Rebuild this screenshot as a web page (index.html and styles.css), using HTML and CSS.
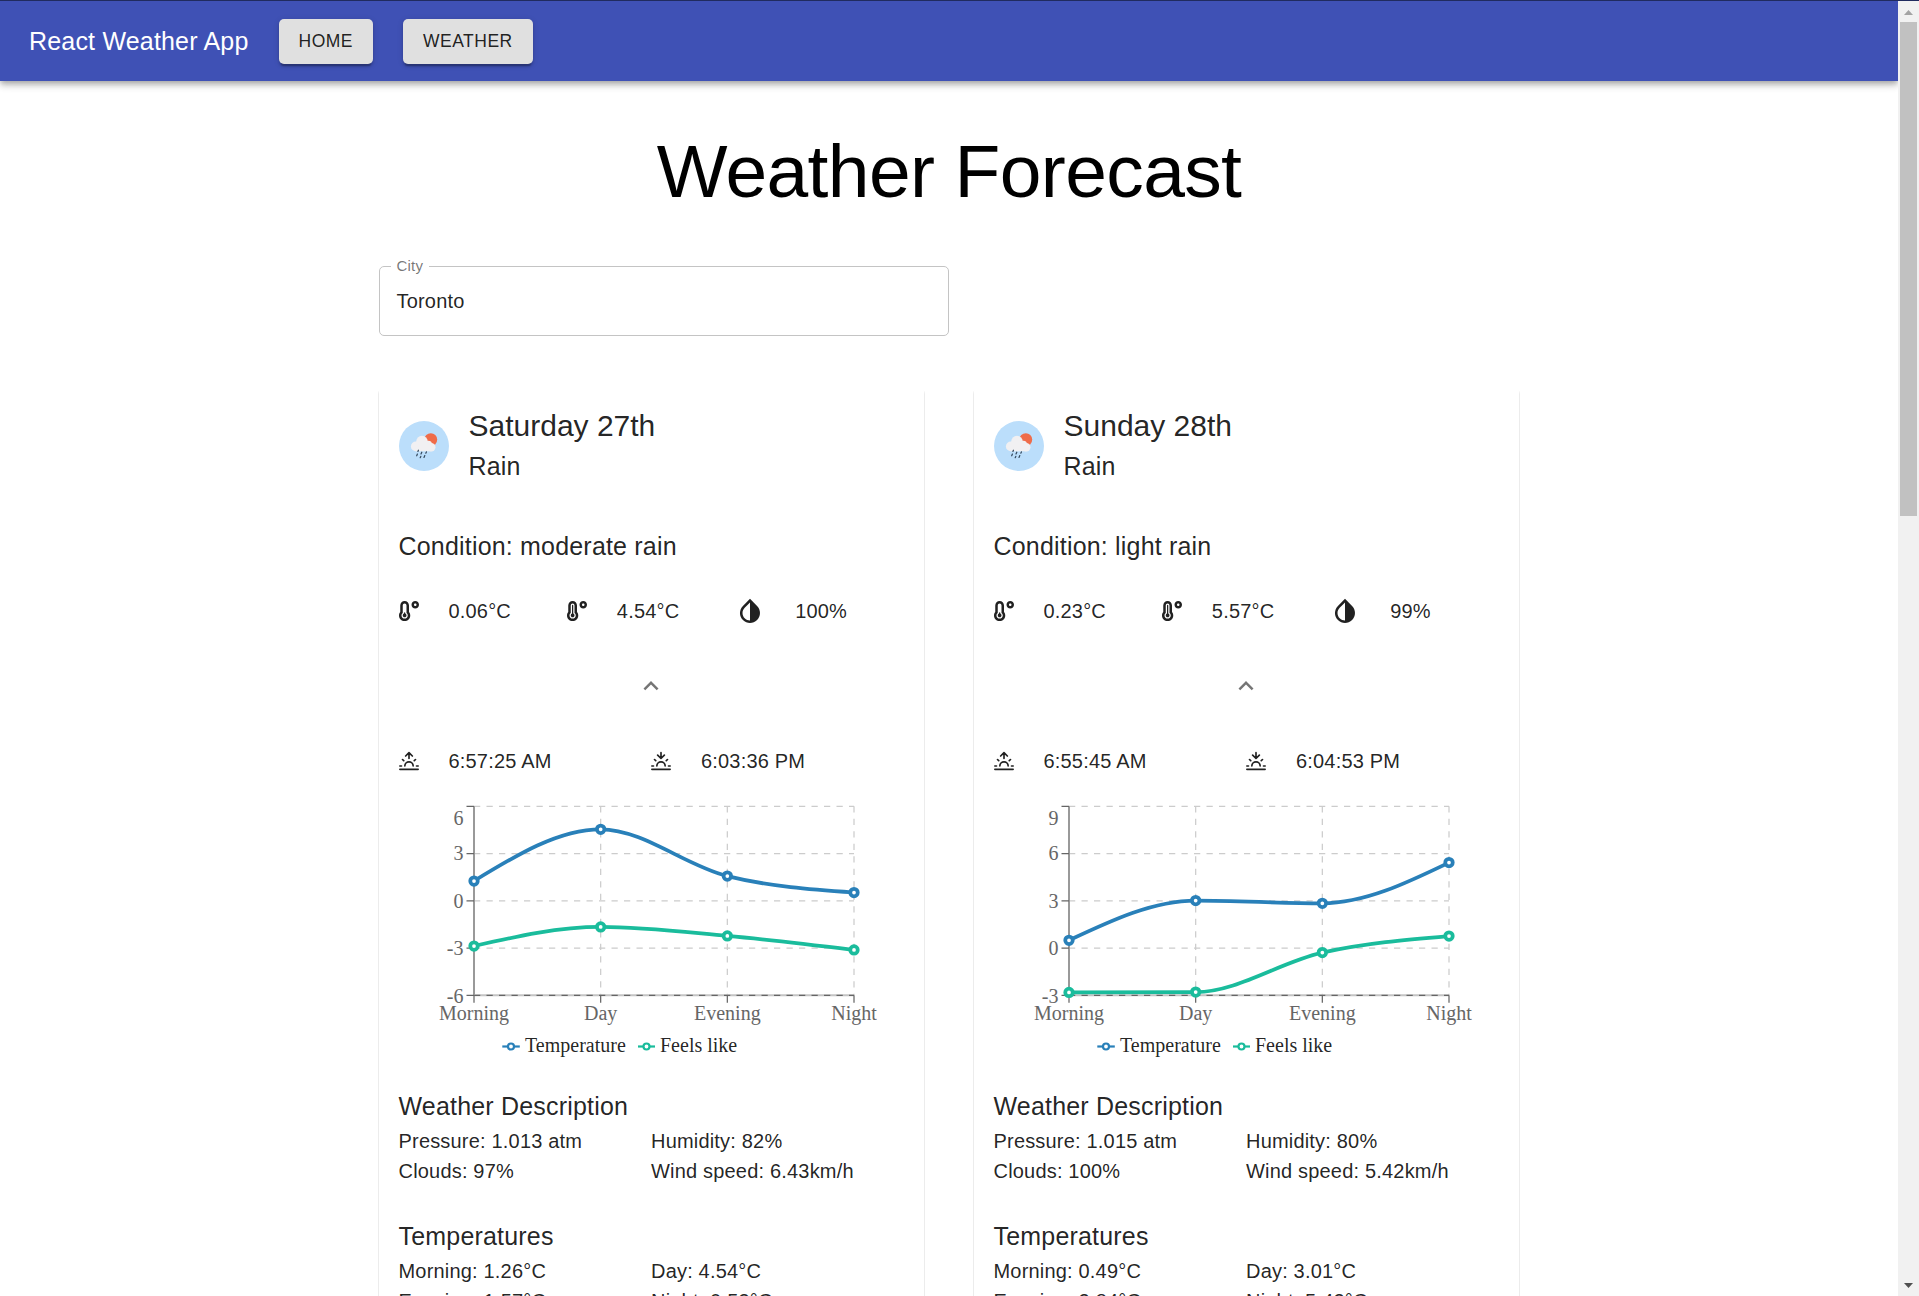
FILE: index.html
```html
<!DOCTYPE html>
<html lang="en">
<head>
<meta charset="utf-8">
<title>React Weather App</title>
<link rel="stylesheet" href="styles.css">
</head>
<body>
<svg class="sprite" aria-hidden="true">
  <symbol id="temp-low" viewBox="0 0 512 512"><path d="M416 0c-52.9 0-96 43.1-96 96s43.1 96 96 96 96-43.1 96-96-43.1-96-96-96zm0 128c-17.7 0-32-14.3-32-32s14.3-32 32-32 32 14.3 32 32-14.3 32-32 32zm-160-16C256 50.1 205.9 0 144 0S32 50.1 32 112v166.5C12.3 303.2 0 334 0 368c0 79.5 64.5 144 144 144s144-64.5 144-144c0-34-12.3-64.9-32-89.5V112zM144 448c-44.1 0-80-35.9-80-80 0-25.5 12.2-48.9 32-63.8V112c0-26.5 21.5-48 48-48s48 21.5 48 48v192.2c19.8 14.8 32 38.3 32 63.8 0 44.1-35.9 80-80 80zm16-125.1V304c0-8.8-7.2-16-16-16s-16 7.2-16 16v18.9c-18.6 6.6-32 24.2-32 45.1 0 26.5 21.5 48 48 48s48-21.5 48-48c0-20.9-13.4-38.5-32-45.1z"/></symbol>
  <symbol id="temp-high" viewBox="0 0 512 512"><path d="M416 0c-52.9 0-96 43.1-96 96s43.1 96 96 96 96-43.1 96-96-43.1-96-96-96zm0 128c-17.7 0-32-14.3-32-32s14.3-32 32-32 32 14.3 32 32-14.3 32-32 32zm-160-16C256 50.1 205.9 0 144 0S32 50.1 32 112v166.5C12.3 303.2 0 334 0 368c0 79.5 64.5 144 144 144s144-64.5 144-144c0-34-12.3-64.9-32-89.5V112zM144 448c-44.1 0-80-35.9-80-80 0-25.5 12.2-48.9 32-63.8V112c0-26.5 21.5-48 48-48s48 21.5 48 48v192.2c19.8 14.8 32 38.3 32 63.8 0 44.1-35.9 80-80 80zm16-125.1V112c0-8.8-7.2-16-16-16s-16 7.2-16 16v210.9c-18.6 6.6-32 24.2-32 45.1 0 26.5 21.5 48 48 48s48-21.5 48-48c0-20.9-13.4-38.5-32-45.1z"/></symbol>
  <symbol id="invert" viewBox="0 0 24 24"><path d="M17.66 7.93L12 2.27 6.34 7.93c-3.12 3.12-3.12 8.19 0 11.31C7.9 20.8 9.95 21.58 12 21.58c2.05 0 4.1-.78 5.66-2.34 3.12-3.12 3.12-8.19 0-11.31zM12 19.59c-1.6 0-3.11-.62-4.24-1.76C6.62 16.69 6 15.19 6 13.59s.62-3.11 1.76-4.24L12 5.1v14.49z"/></symbol>
  <symbol id="less" viewBox="0 0 24 24"><path d="M12 8l-6 6 1.41 1.41L12 10.83l4.59 4.58L18 14z"/></symbol>
  <symbol id="sunrise" viewBox="0 0 24 24"><path class="stroke" d="M17 18a5 5 0 0 0-10 0M12 2v7M4.22 10.22l1.42 1.42M1 18h2M21 18h2M18.36 11.64l1.42-1.42M23 22H1M8 6l4-4 4 4"/></symbol>
  <symbol id="sunset" viewBox="0 0 24 24"><path class="stroke" d="M17 18a5 5 0 0 0-10 0M12 9V2M4.22 10.22l1.42 1.42M1 18h2M21 18h2M18.36 11.64l1.42-1.42M23 22H1M16 5l-4 4-4-4"/></symbol>
  <symbol id="rain" viewBox="0 0 50 50">
    <circle cx="25" cy="25" r="25" fill="#bbdefb"/>
    <circle cx="31.8" cy="18.6" r="6.4" fill="#ef6c4a"/>
    <g fill="#f1f0f2"><circle cx="23" cy="20.6" r="5.8"/><circle cx="16.8" cy="25.4" r="4.9"/><circle cx="29.4" cy="23.4" r="3.6"/><circle cx="32.3" cy="26.3" r="4.2"/><rect x="16.5" y="22" width="16" height="8.3"/></g>
    <path d="M19.4 29.2l-.5 1.2M27.4 30.9l-.6 1.3M22.8 31.2l-.8 1.8M18.4 33l-.7 1.8M25.8 34.6l-.8 1.9M21.8 35.4l-.6 1.3" fill="none" stroke="#33475b" stroke-width="1.2" stroke-linecap="round"/>
  </symbol>
  <symbol id="axes" viewBox="0 0 505 250">
    <g class="grid-lines">
      <path d="M75 6.3h380M75 53.5h380M75 100.8h380M75 148h380"/>
      <path d="M201.67 6.3v189M328.33 6.3v189M455 6.3v189"/>
    </g>
    <path class="axis-soft" d="M75 195.3h380"/>
    <path class="axis-dash" d="M75 195.3h380"/>
    <path class="axis-side" d="M75 6.3v189"/>
    <path class="axis" d="M75 195.3v7.5M201.67 195.3v7.5M328.33 195.3v7.5M455 195.3v7.5M75 6.3h-7.5M75 53.5h-7.5M75 100.8h-7.5M75 148h-7.5M75 195.3h-7.5"/>
    <g class="tick tick-x"><text x="75" y="220">Morning</text><text x="201.67" y="220">Day</text><text x="328.33" y="220">Evening</text><text x="455" y="220">Night</text></g>
  </symbol>
</svg>

<div class="window">
  <div class="page">
    <header class="app-bar">
      <span class="brand">React Weather App</span>
      <nav class="nav"><a class="button">HOME</a><a class="button">WEATHER</a></nav>
    </header>
    <main class="container">
      <h1 class="title">Weather Forecast</h1>
      <fieldset class="field"><legend class="field-label">City</legend><span class="field-value">Toronto</span></fieldset>
      <div class="cards">
        <article class="card">
          <header class="card-header">
            <svg class="avatar"><use href="#rain"/></svg>
            <div><h2 class="day">Saturday 27th</h2><p class="heading">Rain</p></div>
          </header>
          <div class="card-body">
            <p class="heading">Condition: moderate rain</p>
            <div class="stats">
              <div class="stat"><svg class="icon"><use href="#temp-low"/></svg><span>0.06°C</span></div>
              <div class="stat"><svg class="icon"><use href="#temp-high"/></svg><span>4.54°C</span></div>
              <div class="stat"><svg class="icon icon-large"><use href="#invert"/></svg><span>100%</span></div>
            </div>
            <div class="toggle"><svg class="icon icon-large"><use href="#less"/></svg></div>
            <div class="halves">
              <div class="stat"><svg class="icon"><use href="#sunrise"/></svg><span>6:57:25 AM</span></div>
              <div class="stat"><svg class="icon"><use href="#sunset"/></svg><span>6:03:36 PM</span></div>
            </div>
            <svg class="chart" viewBox="0 0 505 250">
              <use href="#axes" width="505" height="250"/>
              <g class="tick tick-y"><text x="64.5" y="25">6</text><text x="64.5" y="60.3">3</text><text x="64.5" y="107.6">0</text><text x="64.5" y="155">-3</text><text x="64.5" y="203">-6</text></g>
              <g class="blue">
                <path d="M75 81C117.22 55.15 159.44 29.3 201.67 29.3C243.89 29.3 286.11 65.57 328.33 76.1C370.56 86.63 412.78 89.57 455 92.5"/>
                <circle cx="75" cy="81" r="3.75"/><circle cx="201.67" cy="29.3" r="3.75"/><circle cx="328.33" cy="76.1" r="3.75"/><circle cx="455" cy="92.5" r="3.75"/>
              </g>
              <g class="green">
                <path d="M75 146C117.22 136.45 159.44 126.9 201.67 126.9C243.89 126.9 286.11 132.07 328.33 135.9C370.56 139.73 412.78 144.82 455 149.9"/>
                <circle cx="75" cy="146" r="3.75"/><circle cx="201.67" cy="126.9" r="3.75"/><circle cx="328.33" cy="135.9" r="3.75"/><circle cx="455" cy="149.9" r="3.75"/>
              </g>
              <g class="blue key"><path d="M103.3 246.5h17.5"/><circle cx="112" cy="246.5" r="3"/></g>
              <g class="green key"><path d="M239 246.5h17"/><circle cx="247.5" cy="246.5" r="3"/></g>
              <g class="legend"><text x="126" y="251.5">Temperature</text><text x="261" y="251.5">Feels like</text></g>
            </svg>
            <section class="details">
              <h3 class="heading">Weather Description</h3>
              <div class="halves"><span>Pressure: 1.013 atm</span><span>Humidity: 82%</span><span>Clouds: 97%</span><span>Wind speed: 6.43km/h</span></div>
            </section>
            <section class="details">
              <h3 class="heading">Temperatures</h3>
              <div class="halves"><span>Morning: 1.26°C</span><span>Day: 4.54°C</span><span>Evening: 1.57°C</span><span>Night: 0.53°C</span></div>
            </section>
          </div>
        </article>

        <article class="card">
          <header class="card-header">
            <svg class="avatar"><use href="#rain"/></svg>
            <div><h2 class="day">Sunday 28th</h2><p class="heading">Rain</p></div>
          </header>
          <div class="card-body">
            <p class="heading">Condition: light rain</p>
            <div class="stats">
              <div class="stat"><svg class="icon"><use href="#temp-low"/></svg><span>0.23°C</span></div>
              <div class="stat"><svg class="icon"><use href="#temp-high"/></svg><span>5.57°C</span></div>
              <div class="stat"><svg class="icon icon-large"><use href="#invert"/></svg><span>99%</span></div>
            </div>
            <div class="toggle"><svg class="icon icon-large"><use href="#less"/></svg></div>
            <div class="halves">
              <div class="stat"><svg class="icon"><use href="#sunrise"/></svg><span>6:55:45 AM</span></div>
              <div class="stat"><svg class="icon"><use href="#sunset"/></svg><span>6:04:53 PM</span></div>
            </div>
            <svg class="chart" viewBox="0 0 505 250">
              <use href="#axes" width="505" height="250"/>
              <g class="tick tick-y"><text x="64.5" y="25">9</text><text x="64.5" y="60.3">6</text><text x="64.5" y="107.6">3</text><text x="64.5" y="155">0</text><text x="64.5" y="203">-3</text></g>
              <g class="blue">
                <path d="M75 140.3C117.22 120.45 159.44 100.6 201.67 100.6C243.89 100.6 286.11 103.3 328.33 103.3C370.56 103.3 412.78 82.95 455 62.6"/>
                <circle cx="75" cy="140.3" r="3.75"/><circle cx="201.67" cy="100.6" r="3.75"/><circle cx="328.33" cy="103.3" r="3.75"/><circle cx="455" cy="62.6" r="3.75"/>
              </g>
              <g class="green">
                <path d="M75 192.4C117.22 192.35 159.44 192.3 201.67 192.1C243.89 191.9 286.11 161.95 328.33 152.6C370.56 143.25 412.78 139.63 455 136"/>
                <circle cx="75" cy="192.4" r="3.75"/><circle cx="201.67" cy="192.1" r="3.75"/><circle cx="328.33" cy="152.6" r="3.75"/><circle cx="455" cy="136" r="3.75"/>
              </g>
              <g class="blue key"><path d="M103.3 246.5h17.5"/><circle cx="112" cy="246.5" r="3"/></g>
              <g class="green key"><path d="M239 246.5h17"/><circle cx="247.5" cy="246.5" r="3"/></g>
              <g class="legend"><text x="126" y="251.5">Temperature</text><text x="261" y="251.5">Feels like</text></g>
            </svg>
            <section class="details">
              <h3 class="heading">Weather Description</h3>
              <div class="halves"><span>Pressure: 1.015 atm</span><span>Humidity: 80%</span><span>Clouds: 100%</span><span>Wind speed: 5.42km/h</span></div>
            </section>
            <section class="details">
              <h3 class="heading">Temperatures</h3>
              <div class="halves"><span>Morning: 0.49°C</span><span>Day: 3.01°C</span><span>Evening: 2.84°C</span><span>Night: 5.42°C</span></div>
            </section>
          </div>
        </article>
      </div>
    </main>
  </div>
  <aside class="scrollbar">
    <svg class="arrow" viewBox="0 0 21 21"><path d="M6 14l4.5-5 4.5 5z" fill="#a3a3a3"/></svg>
    <div class="thumb"></div>
    <svg class="arrow arrow-down" viewBox="0 0 21 21"><path d="M6 8l4.5 5 4.5-5z" fill="#505050"/></svg>
  </aside>
</div>
</body>
</html>
```
FILE: styles.css
```css
* { box-sizing: border-box; }

body {
  margin: 0;
  height: 1296px;
  overflow: hidden;
  background: #fff;
  color: rgba(0, 0, 0, .87);
  font: 20px/30px "Liberation Sans", Arial, sans-serif;
  letter-spacing: .00938em;
}

h1, h2, h3, p { margin: 0; font-weight: 400; }

.sprite { display: none; }

.window {
  display: flex;
  height: 1296px;
  border-top: 1px solid #202b5f;
  overflow: hidden;
}

.page { flex: 1; overflow: hidden; }

/* App bar */
.app-bar {
  display: flex;
  align-items: center;
  gap: 30px;
  height: 80px;
  padding: 0 29px;
  background: #3f51b5;
  color: #fff;
  box-shadow: 0 2.5px 5px -1px rgba(0, 0, 0, .2), 0 5px 6px rgba(0, 0, 0, .14), 0 1px 12px rgba(0, 0, 0, .12);
}

.brand { font-size: 25px; line-height: 40px; letter-spacing: .0075em; }

.nav { display: flex; gap: 30px; }

.button {
  height: 45px;
  padding: 7.5px 20px;
  border-radius: 5px;
  background: #e0e0e0;
  color: rgba(0, 0, 0, .87);
  font-size: 17.5px;
  letter-spacing: .02857em;
  box-shadow: 0 4px 1px -2.5px rgba(0, 0, 0, .2), 0 2.5px 2.5px rgba(0, 0, 0, .14), 0 1px 6px rgba(0, 0, 0, .12);
}

.container { width: 1140px; margin: 0 auto; }

.title {
  padding-top: 45px;
  color: #000;
  font-size: 75px;
  line-height: 90px;
  letter-spacing: -.00833em;
  text-align: center;
}

/* City input */
.field {
  width: 570px;
  height: 78px;
  margin: 42px 0 50px;
  padding: 15px 16.5px 0;
  border: 1px solid #c4c4c4;
  border-radius: 5px;
}

.field-label {
  margin-left: -6px;
  padding: 0 6px;
  color: rgba(0, 0, 0, .54);
  font-size: 15px;
  line-height: 16px;
}

.field-value { display: block; line-height: 24px; }

/* Day cards */
.cards { display: grid; grid-template-columns: 545px 545px; gap: 50px; }

.card {
  border-radius: 5px;
  background: #fff;
  box-shadow: 0 3px 0 1px rgba(0, 0, 0, .075);
  clip-path: inset(1px -2px -5px);
}

.card-header { display: flex; align-items: center; gap: 20px; padding: 20px 20px 20px 19.5px; }
.avatar { width: 50px; height: 50px; }
.day { font-size: 30px; line-height: 40px; letter-spacing: 0; }
.heading { font-size: 25px; line-height: 40px; letter-spacing: .0075em; }
.card-body { padding: 20px 20.5px 20px 19.5px; }

.stats { display: grid; grid-template-columns: repeat(3, 1fr); margin-top: 30px; }
.halves { display: grid; grid-template-columns: 1fr 1fr; }
.stat { display: flex; align-items: center; gap: 30px; height: 30px; }

.icon { width: 20px; height: 20px; fill: #212121; }
.icon-large { width: 30px; height: 30px; }
.stroke { fill: none; stroke: #212121; stroke-width: 2; stroke-linecap: round; stroke-linejoin: round; }

.toggle { display: flex; justify-content: center; margin: 45px 0; }
.toggle .icon { fill: #757575; }

/* Line charts */
.chart { display: block; width: 505px; height: 250px; margin: 24px 0 36px .5px; overflow: visible; font: 20px "Liberation Serif", "Times New Roman", serif; letter-spacing: 0; }
.grid-lines { fill: none; stroke: #ccc; stroke-width: 1.25; stroke-dasharray: 6.25 6.25; }
.axis { fill: none; stroke: #666; stroke-width: 1.25; }
.axis-soft { fill: none; stroke: #c4c4c4; stroke-width: 2; }
.axis-dash { fill: none; stroke: #666; stroke-width: 1.25; stroke-dasharray: 6.25 6.25; }
.axis-side { fill: none; stroke: #999; stroke-width: 2; }
.tick { fill: #666; }
.tick-x { text-anchor: middle; }
.tick-y { text-anchor: end; }
.blue { fill: #fff; stroke: #2980b9; stroke-width: 3.75; }
.green { fill: #fff; stroke: #1abc9c; stroke-width: 3.75; }
.blue path, .green path { fill: none; }
.key { stroke-width: 2.2; }
.legend { fill: rgba(0, 0, 0, .87); }

.details { margin-bottom: 30px; }

/* Page scrollbar */
.scrollbar { display: flex; flex-direction: column; align-items: center; width: 21px; background: #f1f1f1; }
.arrow { width: 21px; height: 21px; }
.arrow-down { margin-top: auto; }
.thumb { width: 17px; height: 494px; background: #c1c1c1; }
```
